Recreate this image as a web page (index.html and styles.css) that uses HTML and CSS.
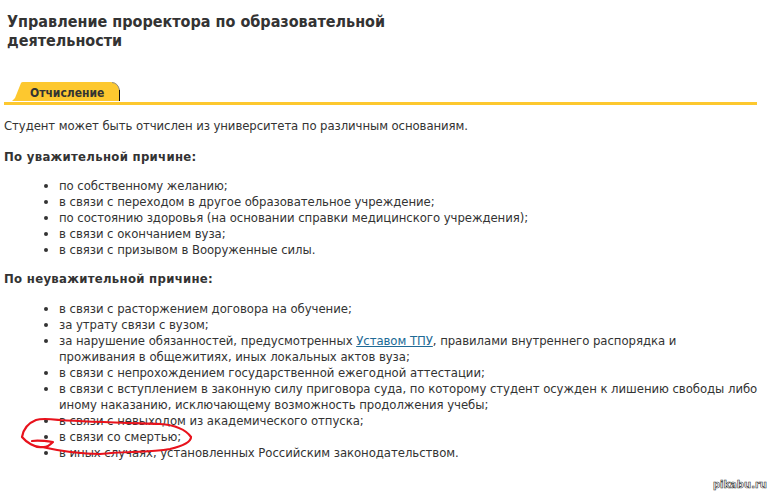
FILE: index.html
```html
<!DOCTYPE html>
<html lang="ru">
<head>
<meta charset="utf-8">
<title>Отчисление</title>
<link rel="stylesheet" href="styles.css">
</head>
<body>
<main class="page">
  <h1 class="title">Управление проректора по образовательной<br>деятельности</h1>
  <div class="tabs"><span class="tab"><svg class="tab-bg" width="120" height="20" viewBox="0 0 120 20"><path d="M8 19 L11 16 L17 1 Q17.500 0 19 0 H107 Q114 0 115.500 8 V19 Z" fill="#fdc82f"/><path d="M108 0.500 Q114 1 115.500 8" fill="none" stroke="#8d8d8d"/><path d="M115.500 8 V19" fill="none" stroke="#111"/></svg><span class="tab-label">Отчисление</span></span></div>
  <p class="intro">Студент может быть отчислен из университета по различным основаниям.</p>
  <p class="heading">По уважительной причине:</p>
  <ul class="list list-first">
    <li>по собственному желанию;</li>
    <li>в связи с переходом в другое образовательное учреждение;</li>
    <li>по состоянию здоровья (на основании справки медицинского учреждения);</li>
    <li>в связи с окончанием вуза;</li>
    <li>в связи с призывом в Вооруженные силы.</li>
  </ul>
  <p class="heading heading-second">По неуважительной причине:</p>
  <ul class="list list-second">
    <li>в связи с расторжением договора на обучение;</li>
    <li>за утрату связи с вузом;</li>
    <li>за нарушение обязанностей, предусмотренных <a class="link" href="#">Уставом ТПУ</a>, правилами внутреннего распорядка и<br>проживания в общежитиях, иных локальных актов вуза;</li>
    <li>в связи с непрохождением государственной ежегодной аттестации;</li>
    <li>в связи с вступлением в законную силу приговора суда, по которому студент осужден к лишению свободы либо<br>иному наказанию, исключающему возможность продолжения учебы;</li>
    <li>в связи с невыходом из академического отпуска;</li>
    <li>в связи со смертью;</li>
    <li>в иных случаях, установленных Российским законодательством.</li>
  </ul>
</main>
<svg class="scribble" width="772" height="496" viewBox="0 0 772 496"><path d="M32 441 C38 440 46 441 53 442 C50 445 46 448 42 447 C35 448 26 442 22 437 C23 431 26 424 36 420 C42 418 50 419 60 420 C90 422 130 423 160 424 C175 425 186 430 191 437 C191 442 183 446 170 449 C150 453 125 451 100 454 C80 454 60 451 42 447" fill="none" stroke="#e8121c" stroke-width="2.200" stroke-linecap="round" stroke-linejoin="round"/></svg>
<span class="watermark">pikabu.ru</span>
</body>
</html>
```
FILE: styles.css
```css
html, body { margin: 0; padding: 0; background: #fff; }
body { width: 772px; height: 496px; overflow: hidden; position: relative; font-family: "DejaVu Sans Condensed", "DejaVu Sans", sans-serif; color: #333; }
.page { padding: 12px 8px 0 4px; font-size: 13px; line-height: 16px; letter-spacing: -0.08px; }
.title { margin: 0 0 0 3px; font-size: 16px; line-height: 19px; font-weight: bold; letter-spacing: 0; color: #333; }
.tabs { margin: 32px 7px 0 0; height: 20px; border-bottom: 3px solid #fdc82f; }
.tab { display: inline-block; position: relative; width: 120px; height: 20px; }
.tab-bg { position: absolute; left: 0; top: 0; }
.tab-label { position: relative; display: block; padding: 3px 0 0 26px; font-size: 12px; letter-spacing: 0; font-weight: bold; line-height: 16px; }
.intro { margin: 13px 0 0; }
.heading { margin: 15px 0 0; font-weight: bold; letter-spacing: 0.3px; }
.heading-second { margin-top: 13px; }
.list { margin: 13px 0 0; padding: 0 0 0 55px; letter-spacing: -0.05px; }
.list-second { margin-top: 14px; }
.list li { margin: 0; }
.link { color: #206a96; }
.scribble { position: absolute; left: 0; top: 0; pointer-events: none; }
.watermark { position: absolute; right: 5px; top: 479px; font: bold 10px/12px "DejaVu Sans", sans-serif; color: #fff; -webkit-text-stroke: 0.6px #333; }
```
